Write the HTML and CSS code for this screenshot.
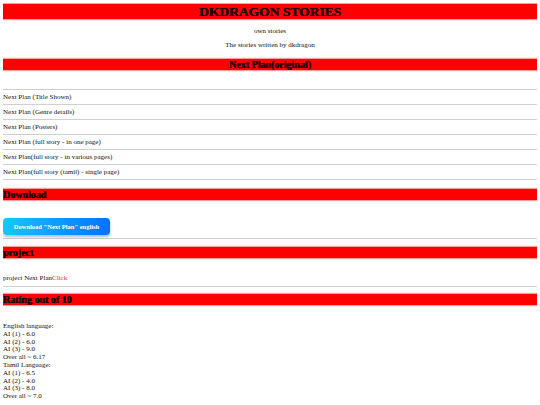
FILE: index.html
```html
<!DOCTYPE html>
<html>
<head>
<meta charset="utf-8">
<link rel="stylesheet" href="styles.css">
</head>
<body>
<h1 class="bar title">DKDRAGON STORIES</h1>
<p class="sub sub1">own stories</p>
<p class="sub sub2">The stories written by dkdragon</p>
<h2 class="bar center">Next Plan(original)</h2>
<div class="list">
  <hr class="rule">
  <div class="item">Next Plan (Title Shown)</div>
  <hr class="rule">
  <div class="item">Next Plan (Genre details)</div>
  <hr class="rule">
  <div class="item">Next Plan (Posters)</div>
  <hr class="rule">
  <div class="item">Next Plan (full story - in one page)</div>
  <hr class="rule">
  <div class="item">Next Plan(full story - in various pages)</div>
  <hr class="rule">
  <div class="item">Next Plan(full story (tamil) - single page)</div>
  <hr class="rule">
</div>
<h2 class="bar left dl">Download</h2>
<div class="btnrow"><span class="btn">Download "Next Plan" english</span></div>
<hr class="rule">
<h2 class="bar left proj">project</h2>
<p class="projline">project Next Plan<span class="click">Click</span></p>
<hr class="rule">
<h2 class="bar left rate">Rating out of 10</h2>
<div class="ratings">
English language:<br>
AI (1) - 6.0<br>
AI (2) - 6.0<br>
AI (3) - 9.0<br>
Over all ~ 6.17<br>
Tamil Language:<br>
AI (1) - 6.5<br>
AI (2) - 4.0<br>
AI (3) - 8.0<br>
Over all ~ 7.0
</div>
</body>
</html>
```
FILE: styles.css
```css
html, body { background: #fff; }
body {
  margin: 3px 3px 0 3px;
  font-family: "Liberation Serif", serif;
  font-size: 7px;
  color: #111;
}
.bar {
  background: #ff0000;
  color: #2a0000;
  margin: 0;
  font-weight: 700;
  text-shadow: 0 0 0.4px #2a0000, 0.3px 0 0 #2a0000;
  box-shadow: 0 0 1px 1px #f7a0a0;
}
.title {
  margin-top: 1px;
  height: 15px;
  line-height: 16px;
  font-size: 13.5px;
  text-align: center;
}
.sub { margin: 0; text-align: center; line-height: 8px; }
.sub1 { margin-top: 8px; }
.sub2 { margin-top: 6px; }
h2.bar {
  font-size: 10px;
  height: 11px;
  line-height: 12px;
}
.center { text-align: center; margin-top: 10px; }
.left { text-align: left; }
.rule {
  border: 0;
  border-top: 1px solid #cfcfcf;
  margin: 0;
  height: 0;
}
.list { margin-top: 19px; }
.item { height: 14px; line-height: 14px; }
.dl { margin-top: 9px; }
.btnrow { padding-top: 18px; height: 20px; }
.btn {
  display: inline-block;
  width: 107px;
  height: 17px;
  line-height: 17px;
  text-align: center;
  color: #fff;
  font-weight: bold;
  font-size: 6.5px;
  border-radius: 4px;
  background: linear-gradient(90deg, #14c8fb, #0a70ff);
  box-shadow: 0 2px 3px rgba(0,60,140,0.35);
}
.proj { margin-top: 8px; }
.projline { margin: 0; padding-top: 16px; height: 12px; line-height: 8px; }
.click { color: #e03030; }
.rate { margin-top: 7px; }
.ratings { margin-top: 18px; line-height: 7.8px; }
```
